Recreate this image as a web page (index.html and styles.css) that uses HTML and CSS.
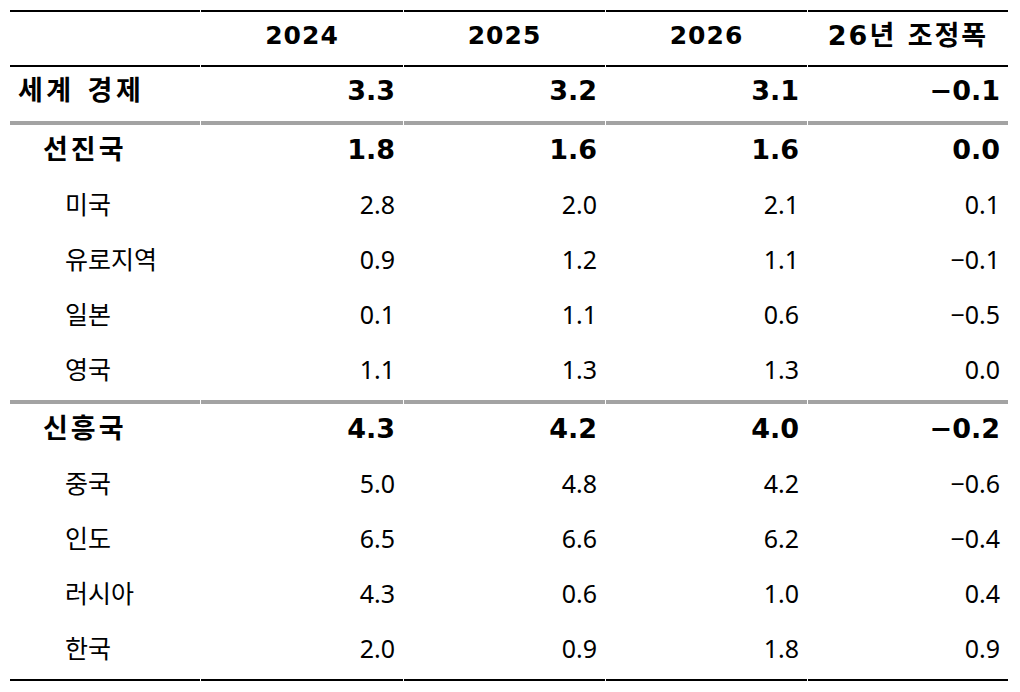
FILE: index.html
```html
<!DOCTYPE html>
<html lang="ko">
<head>
<meta charset="utf-8">
<title>세계 경제 전망</title>
<link rel="stylesheet" href="styles.css">
</head>
<body>
<table class="outlook">
  <thead>
    <tr class="head">
      <th class="label"></th>
      <th>2024</th>
      <th>2025</th>
      <th>2026</th>
      <th class="adj">26년 조정폭</th>
    </tr>
  </thead>
  <tbody>
    <tr class="world sep">
      <td class="label l0">세계 경제</td>
      <td>3.3</td><td>3.2</td><td>3.1</td><td>−0.1</td>
    </tr>
    <tr class="group">
      <td class="label l1">선진국</td>
      <td>1.8</td><td>1.6</td><td>1.6</td><td>0.0</td>
    </tr>
    <tr class="item">
      <td class="label l2">미국</td>
      <td>2.8</td><td>2.0</td><td>2.1</td><td>0.1</td>
    </tr>
    <tr class="item">
      <td class="label l2">유로지역</td>
      <td>0.9</td><td>1.2</td><td>1.1</td><td>−0.1</td>
    </tr>
    <tr class="item">
      <td class="label l2">일본</td>
      <td>0.1</td><td>1.1</td><td>0.6</td><td>−0.5</td>
    </tr>
    <tr class="item sep">
      <td class="label l2">영국</td>
      <td>1.1</td><td>1.3</td><td>1.3</td><td>0.0</td>
    </tr>
    <tr class="group">
      <td class="label l1">신흥국</td>
      <td>4.3</td><td>4.2</td><td>4.0</td><td>−0.2</td>
    </tr>
    <tr class="item">
      <td class="label l2">중국</td>
      <td>5.0</td><td>4.8</td><td>4.2</td><td>−0.6</td>
    </tr>
    <tr class="item">
      <td class="label l2">인도</td>
      <td>6.5</td><td>6.6</td><td>6.2</td><td>−0.4</td>
    </tr>
    <tr class="item">
      <td class="label l2">러시아</td>
      <td>4.3</td><td>0.6</td><td>1.0</td><td>0.4</td>
    </tr>
    <tr class="item last">
      <td class="label l2">한국</td>
      <td>2.0</td><td>0.9</td><td>1.8</td><td>0.9</td>
    </tr>
  </tbody>
</table>
</body>
</html>
```
FILE: styles.css
```css
html, body {
  margin: 0;
  padding: 0;
  background: #ffffff;
}

body {
  padding: 10px 12px 0 9px;
  color: #000000;
  font-family: "Noto Sans", "Noto Sans CJK KR", sans-serif;
}

.outlook {
  border-collapse: separate;
  border-spacing: 1px 0;
  width: 1000px;
  table-layout: fixed;
}

.outlook th,
.outlook td {
  padding: 0 8px 7px 0;
  text-align: right;
  white-space: nowrap;
  line-height: 1;
}

.outlook th:nth-child(1), .outlook td:nth-child(1) { width: 190px; }
.outlook th:nth-child(2), .outlook td:nth-child(2) { width: 202px; }
.outlook th:nth-child(3), .outlook td:nth-child(3) { width: 201px; }
.outlook th:nth-child(4), .outlook td:nth-child(4) { width: 201px; }

.outlook .head th {
  height: 46px;
  padding: 0 0 7px 0;
  text-align: center;
  border-top: 2px solid #000;
  border-bottom: 2px solid #000;
  font-family: "DejaVu Sans", "Noto Sans CJK KR", sans-serif;
  font-weight: bold;
  font-size: 25px;
  letter-spacing: 1px;
}

.outlook .head th.adj {
  font-size: 27px;
  letter-spacing: 2px;
  padding-left: 0;
}

.world td {
  height: 47px;
  font-family: "DejaVu Sans", "Noto Sans CJK KR", sans-serif;
  font-weight: bold;
  font-size: 27px;
}

.group td {
  height: 48px;
  font-family: "DejaVu Sans", "Noto Sans CJK KR", sans-serif;
  font-weight: bold;
  font-size: 27px;
}

.item td {
  height: 48px;
  font-size: 25px;
  font-weight: normal;
}

.sep td {
  border-bottom: 4px solid #a3a3a3;
}

.last td {
  border-bottom: 2px solid #000;
}

.outlook .label {
  text-align: left;
}

.outlook .l0 {
  padding-left: 8px;
  letter-spacing: 3.5px;
}

.outlook .l1 {
  padding-left: 33px;
  letter-spacing: 3px;
}

.outlook .l2 {
  padding-left: 55px;
}
```
